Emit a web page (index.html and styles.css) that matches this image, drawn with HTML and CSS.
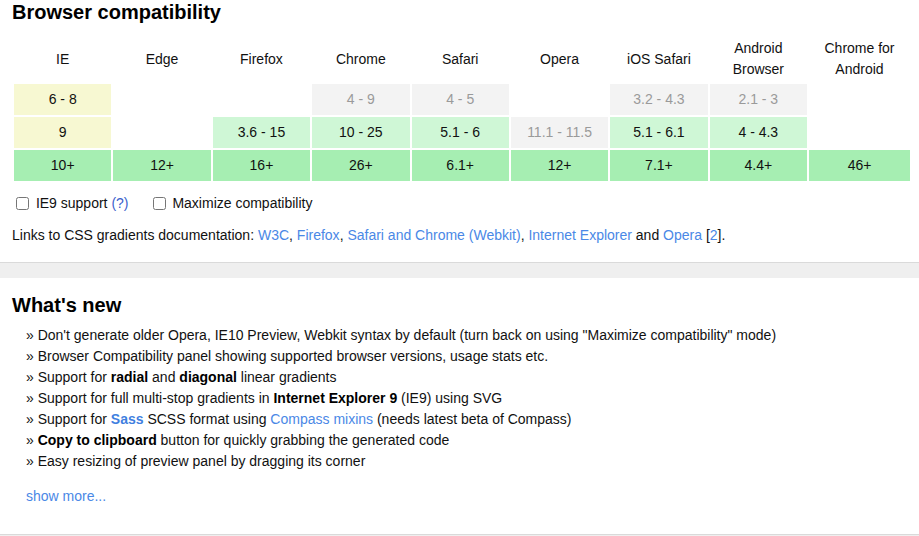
FILE: index.html
```html
<!DOCTYPE html>
<html lang="en">
<head>
<meta charset="utf-8">
<title>Browser compatibility</title>
<link rel="stylesheet" href="styles.css">
</head>
<body>
<section class="panel panel-compat">
  <h2 class="title">Browser compatibility</h2>
  <table class="compat">
    <thead>
      <tr>
        <th>IE</th>
        <th>Edge</th>
        <th>Firefox</th>
        <th>Chrome</th>
        <th>Safari</th>
        <th>Opera</th>
        <th>iOS Safari</th>
        <th>Android<br>Browser</th>
        <th class="col-last">Chrome for<br>Android</th>
      </tr>
    </thead>
    <tbody>
      <tr>
        <td class="ie">6 - 8</td>
        <td></td>
        <td></td>
        <td class="old">4 - 9</td>
        <td class="old">4 - 5</td>
        <td></td>
        <td class="old">3.2 - 4.3</td>
        <td class="old">2.1 - 3</td>
        <td></td>
      </tr>
      <tr>
        <td class="ie">9</td>
        <td></td>
        <td class="pre">3.6 - 15</td>
        <td class="pre">10 - 25</td>
        <td class="pre">5.1 - 6</td>
        <td class="old">11.1 - 11.5</td>
        <td class="pre">5.1 - 6.1</td>
        <td class="pre">4 - 4.3</td>
        <td></td>
      </tr>
      <tr>
        <td class="full">10+</td>
        <td class="full">12+</td>
        <td class="full">16+</td>
        <td class="full">26+</td>
        <td class="full">6.1+</td>
        <td class="full">12+</td>
        <td class="full">7.1+</td>
        <td class="full">4.4+</td>
        <td class="full">46+</td>
      </tr>
    </tbody>
  </table>
  <div class="options">
    <label class="opt"><input type="checkbox"> IE9 support <a class="help" href="#">(?)</a></label>
    <label class="opt"><input type="checkbox"> Maximize compatibility</label>
  </div>
  <p class="links">Links to CSS gradients documentation: <a href="#">W3C</a>, <a href="#">Firefox</a>, <a href="#">Safari and Chrome (Webkit)</a>, <a href="#">Internet Explorer</a> and <a href="#">Opera</a> [<a href="#">2</a>].</p>
</section>
<section class="panel panel-new">
  <h2 class="title">What's new</h2>
  <ul class="news">
    <li>» Don't generate older Opera, IE10 Preview, Webkit syntax by default (turn back on using "Maximize compatibility" mode)</li>
    <li>» Browser Compatibility panel showing supported browser versions, usage stats etc.</li>
    <li>» Support for <b>radial</b> and <b>diagonal</b> linear gradients</li>
    <li>» Support for full multi-stop gradients in <b>Internet Explorer 9</b> (IE9) using SVG</li>
    <li>» Support for <a class="sass" href="#">Sass</a> SCSS format using <a href="#">Compass mixins</a> (needs latest beta of Compass)</li>
    <li>» <b>Copy to clipboard</b> button for quickly grabbing the generated code</li>
    <li>» Easy resizing of preview panel by dragging its corner</li>
  </ul>
  <a class="more" href="#">show more...</a>
</section>
<div class="panel-tail"></div>
</body>
</html>
```

FILE: styles.css
```css
html, body {
  margin: 0;
  padding: 0;
}
body {
  background: #efefef;
  font-family: "Liberation Sans", Arial, sans-serif;
  font-size: 14px;
  line-height: 21px;
  color: #111;
}
a {
  color: #4a88e6;
  text-decoration: none;
}
.panel {
  background: #fff;
  padding: 0 12px;
  border-bottom: 1px solid #dadada;
}
.panel-compat {
  padding-bottom: 16px;
  margin-bottom: 15px;
}
.panel-new {
  padding-top: 15px;
  padding-bottom: 27px;
}
.panel-tail {
  height: 20px;
}
.title {
  margin: 0;
  font-size: 20px;
  line-height: 24px;
  font-weight: bold;
  color: #000;
}
.compat {
  margin-top: 12px;
  width: 900px;
  table-layout: fixed;
  border-collapse: separate;
  border-spacing: 2px;
}
.compat th {
  font-weight: normal;
  padding: 0 0 2px;
  text-align: center;
  vertical-align: middle;
  color: #111;
}
.compat th.col-last {
  width: 101px;
}
.compat td {
  padding: 5px 0;
  height: 21px;
  text-align: center;
  color: #111;
}
.compat td.ie {
  background: #f7f8d2;
}
.compat td.old {
  background: #f3f3f3;
  color: #9a9a9a;
}
.compat td.pre {
  background: #cff7d6;
}
.compat td.full {
  background: #a6eeb2;
}
.options {
  margin-top: 10px;
  display: flex;
  gap: 20px;
  height: 21px;
  align-items: center;
}
.opt {
  display: flex;
  align-items: center;
  white-space: pre;
}
.opt input {
  margin: 0 3px 0 4px;
  width: 13px;
  height: 13px;
}
.help {
  color: #3b5fcc;
}
.links {
  margin: 11px 0 0;
}
.news {
  list-style: none;
  margin: 8px 0 0;
  padding: 0 0 0 14px;
}
.news b {
  color: #000;
}
.sass {
  font-weight: bold;
  color: #3f7fe0;
}
.more {
  display: block;
  margin: 14px 0 0 14px;
}
```
